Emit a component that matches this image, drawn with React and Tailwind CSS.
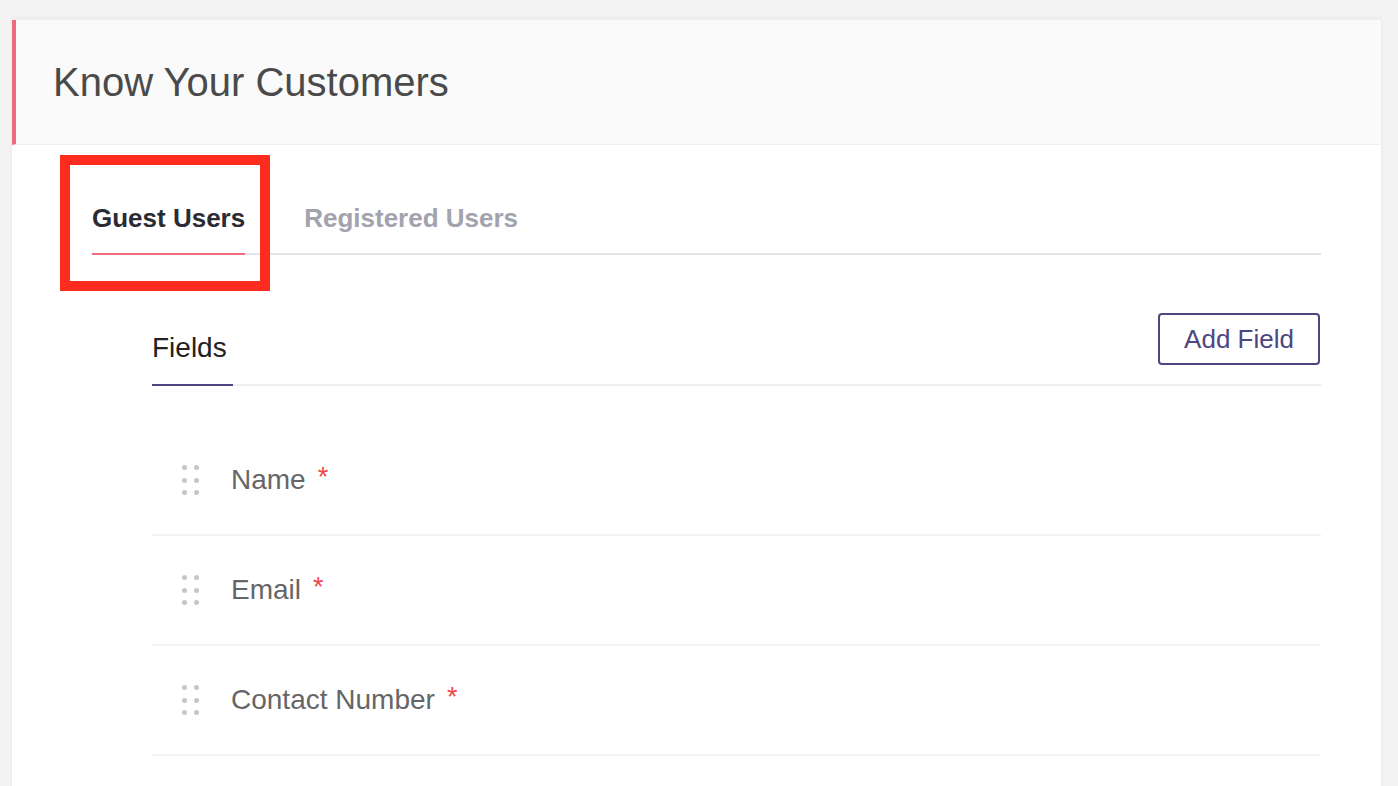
import React from 'react';

const fields = [
  { label: 'Name', required: true },
  { label: 'Email', required: true },
  { label: 'Contact Number', required: true },
];

const DragHandle = () => (
  <div className="grid grid-cols-2 gap-x-[7px] gap-y-[7.5px] w-[17px]">
    {[0, 1, 2, 3, 4, 5].map((i) => (
      <span key={i} className="block w-[5px] h-[5px] rounded-full bg-[#c6c6c6]" />
    ))}
  </div>
);

const App = () => {
  return (
    <div
      className="relative min-h-screen bg-[#f4f4f4] pt-[18px] pl-[12px] overflow-hidden"
      style={{ fontFamily: '"Liberation Sans", Arial, sans-serif' }}
    >
      <div className="w-[1369px] bg-white border-t-2 border-[#ededed] shadow-[0_0_4px_rgba(0,0,0,0.07)] min-h-[800px]">
        {/* Header */}
        <div className="h-[125px] flex items-center bg-[#fafafa] border-l-4 border-[#f06a7f] border-b border-b-[#efefef] pl-[37px]">
          <h1 className="text-[40px] leading-[40px] text-[#4a4a4a] font-normal">Know Your Customers</h1>
        </div>

        {/* Body */}
        <div className="pl-[80px] pr-[60px] pt-[60px]">
          {/* User tabs */}
          <div className="flex border-b-2 border-[#e3e4ea]">
            <button className="-mb-[2px] pb-[22px] border-b-2 border-[#ef6b80] text-[26px] leading-[26px] font-bold text-[#2b2b33]">
              Guest Users
            </button>
            <button className="ml-[59px] pb-[22px] text-[26px] leading-[26px] font-bold text-[#a3a3ad]">
              Registered Users
            </button>
          </div>

          {/* Fields section */}
          <div className="pl-[60px]">
            <div className="mt-[58px] flex items-end justify-between border-b-2 border-[#efefef]">
              <div className="-mb-[2px] pb-[22px] pr-[6px] border-b-2 border-[#4e4680] text-[28px] leading-[28px] text-[#222]">
                Fields
              </div>
              <button className="mb-[19px] mr-[1px] w-[162px] h-[52px] rounded-[4px] border-2 border-[#4e4680] text-[26px] text-[#4e4680] flex items-center justify-center">
                Add Field
              </button>
            </div>

            <div className="mt-[40px]">
              {fields.map((f) => (
                <div key={f.label} className="h-[110px] flex items-center border-b-2 border-[#f3f3f3] pl-[30px]">
                  <DragHandle />
                  <div className="ml-[32px] flex items-baseline">
                    <span className="text-[28px] text-[#666]">{f.label}</span>
                    {f.required && (
                      <span className="relative -top-[3px] ml-[12px] text-[27px] leading-none text-[#f0484f]">*</span>
                    )}
                  </div>
                </div>
              ))}
            </div>
          </div>
        </div>
      </div>

      {/* annotation highlight */}
      <div className="absolute left-[60px] top-[155px] w-[210px] h-[136px] border-[10px] border-[#fe2b1f] pointer-events-none" />
    </div>
  );
};

export default App;
